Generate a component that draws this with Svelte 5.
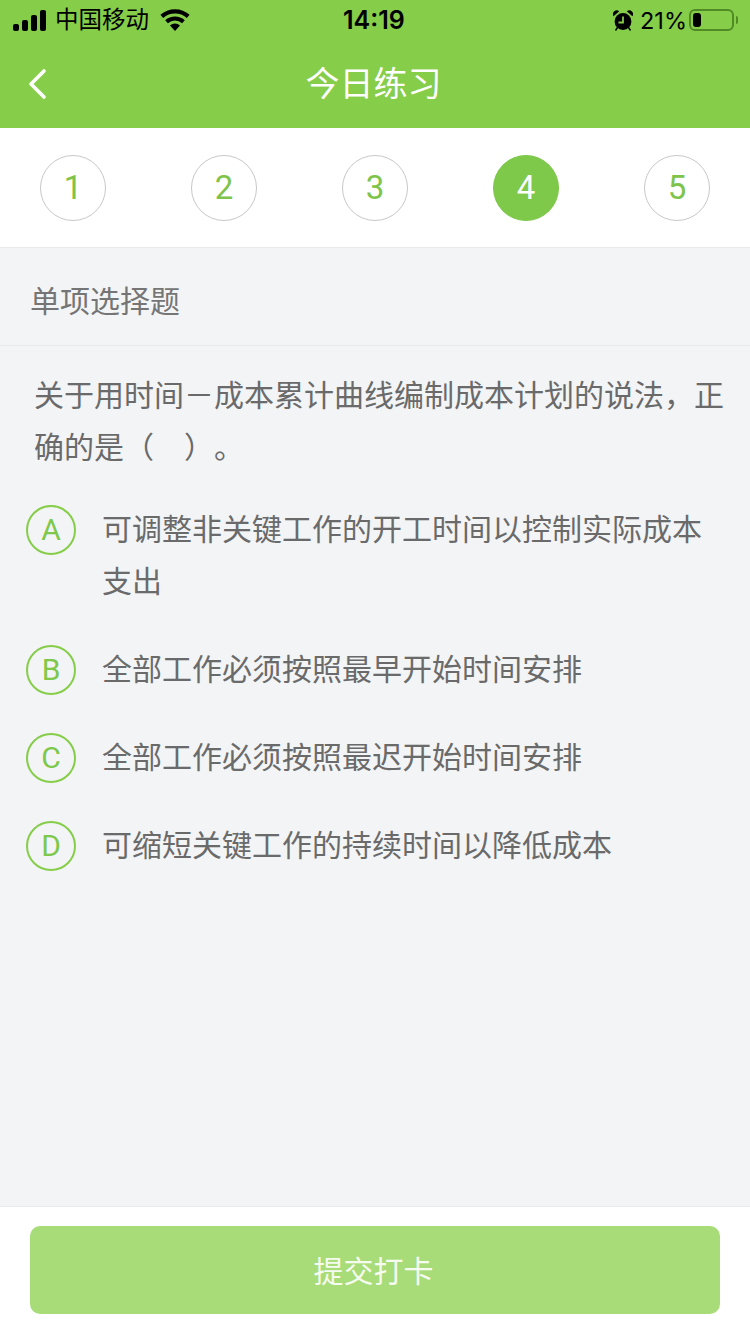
<script>
	const steps = [1, 2, 3, 4, 5];
	const current = 4;

	const options = [
		{ key: 'A', text: '可调整非关键工作的开工时间以控制实际成本支出' },
		{ key: 'B', text: '全部工作必须按照最早开始时间安排' },
		{ key: 'C', text: '全部工作必须按照最迟开始时间安排' },
		{ key: 'D', text: '可缩短关键工作的持续时间以降低成本' }
	];
</script>

<div class="page">
	<header class="head">
		<div class="status">
			<div class="status-left">
				<svg class="signal" width="34" height="21" viewBox="0 0 34 21">
					<rect x="0" y="14" width="6" height="7" rx="2" />
					<rect x="9" y="10" width="6" height="11" rx="2" />
					<rect x="18" y="5" width="6" height="16" rx="2" />
					<rect x="27" y="0" width="6" height="21" rx="2" />
				</svg>
				<span class="carrier">中国移动</span>
				<svg class="wifi" width="30" height="22" viewBox="0 0 30 22">
					<path d="M15 22l-5-5.6a7.4 7.4 0 0 1 10 0z" />
					<path d="M7.9 14.2l-2.7-3a14.6 14.6 0 0 1 19.6 0l-2.7 3a10.6 10.6 0 0 0-14.2 0z" />
					<path d="M3.2 8.9L.4 5.8a21.8 21.8 0 0 1 29.2 0l-2.8 3.1a17.8 17.8 0 0 0-23.6 0z" />
				</svg>
			</div>
			<span class="time">14:19</span>
			<div class="status-right">
				<svg class="alarm" width="20" height="21" viewBox="0 0 20 21">
					<circle cx="10" cy="11.5" r="8.4" />
					<path d="M.6 6.2a3.8 3.8 0 0 1 5.6-5zM19.4 6.2a3.8 3.8 0 0 0-5.6-5z" />
					<path d="M4.5 17.5l-2 3M15.5 17.5l2 3" stroke="#000" stroke-width="1.4" />
					<path d="M10 6.5V12.5H5.5" fill="none" stroke="#86cd4a" stroke-width="1.8" />
				</svg>
				<span class="pct">21%</span>
				<div class="battery">
					<div class="level"></div>
				</div>
				<div class="nub"></div>
			</div>
		</div>
		<div class="nav">
			<svg class="back" width="20" height="32" viewBox="0 0 20 32">
				<path d="M17 3L4 16l13 13" fill="none" stroke="#fff" stroke-width="3.6" stroke-linecap="round" stroke-linejoin="round" />
			</svg>
			<h1>今日练习</h1>
		</div>
	</header>

	<div class="steps">
		{#each steps as n}
			<div class="step" class:active={n === current}>{n}</div>
		{/each}
	</div>

	<main class="body">
		<div class="kind">单项选择题</div>
		<p class="question">关于用时间－成本累计曲线编制成本计划的说法，正确的是（　）。</p>
		<ul class="options">
			{#each options as o}
				<li>
					<span class="badge">{o.key}</span>
					<span class="text">{o.text}</span>
				</li>
			{/each}
		</ul>
	</main>

	<footer class="foot">
		<button class="submit">提交打卡</button>
	</footer>
</div>

<style>
	:global(body) {
		background: #f3f4f6;
	}

	.page {
		display: flex;
		flex-direction: column;
		height: 1334px;
		font-family: 'Liberation Sans', 'Noto Sans CJK SC', sans-serif;
		background: #f3f4f6;
	}

	.head {
		background: #86cd4a;
		height: 128px;
		flex-shrink: 0;
	}

	.status {
		display: flex;
		align-items: center;
		justify-content: space-between;
		position: relative;
		height: 40px;
		padding: 0 12px 0 13px;
		color: #000;
	}

	.status-left,
	.status-right {
		display: flex;
		align-items: center;
	}

	.carrier {
		font-size: 23.5px;
		margin-left: 8px;
		line-height: 42px;
	}

	.wifi {
		margin-left: 11px;
	}

	.time {
		position: absolute;
		left: 343px;
		top: 0;
		font-family: 'Inter', sans-serif;
		font-weight: 600;
		font-size: 25px;
		line-height: 41px;
	}

	.alarm {
		margin-right: 7px;
	}

	.pct {
		font-family: 'Inter', sans-serif;
		font-size: 23.5px;
		margin-right: 2px;
		line-height: 41px;
	}

	.battery {
		box-sizing: border-box;
		width: 45px;
		height: 22px;
		border: 2px solid #4f8a25;
		border-radius: 6px;
		padding: 2px;
	}

	.level {
		width: 8px;
		height: 100%;
		background: #000;
		border-radius: 3px;
	}

	.nub {
		width: 2px;
		height: 8px;
		margin-left: 2px;
		background: #4f8a25;
		border-radius: 0 2px 2px 0;
	}

	.nav {
		position: relative;
		height: 88px;
		display: flex;
		align-items: center;
		justify-content: center;
	}

	.back {
		position: absolute;
		left: 27px;
		top: 28px;
	}

	h1 {
		margin: 0 3px 0 0;
		font-size: 34px;
		font-weight: 400;
		color: #fff;
		line-height: 88px;
	}

	.steps {
		display: flex;
		justify-content: space-between;
		padding: 27px 40px 26px;
		background: #fff;
		border-bottom: 1px solid #e8e9eb;
		flex-shrink: 0;
	}

	.step {
		box-sizing: border-box;
		width: 66px;
		height: 66px;
		border-radius: 50%;
		border: 1px solid #c8c8c8;
		color: #7ec44a;
		font-family: 'Roboto', sans-serif;
		font-size: 33px;
		line-height: 64px;
		text-align: center;
	}

	.step.active {
		background: #7ec84a;
		border-color: #7ec84a;
		color: #fff;
	}

	.body {
		flex: 1;
	}

	.kind {
		height: 98px;
		box-sizing: border-box;
		padding-left: 30px;
		font-size: 30px;
		line-height: 108px;
		color: #757575;
		border-bottom: 1px solid #e8e9eb;
	}

	.question {
		margin: 24px 0 0;
		padding: 0 20px 0 34px;
		font-size: 30px;
		line-height: 52px;
		color: #6a6a6a;
		text-spacing-trim: space-all;
	}

	.options {
		list-style: none;
		margin: 30px 0 0;
		padding: 0 30px 0 26px;
	}

	.options li {
		display: flex;
		align-items: flex-start;
		margin-bottom: 36px;
	}

	.badge {
		box-sizing: border-box;
		flex-shrink: 0;
		width: 50px;
		height: 50px;
		margin-top: 1px;
		border: 2px solid #86cd4a;
		border-radius: 50%;
		color: #7ec84a;
		font-family: 'Roboto', sans-serif;
		font-size: 30px;
		line-height: 46px;
		text-align: center;
	}

	.text {
		margin-left: 26px;
		font-size: 30px;
		line-height: 52px;
		color: #6a6a6a;
	}

	.foot {
		flex-shrink: 0;
		height: 128px;
		box-sizing: border-box;
		padding: 19px 30px;
		background: #fff;
		border-top: 1px solid #e8e9eb;
	}

	.submit {
		display: block;
		width: 100%;
		height: 88px;
		padding: 0 3px 2px 0;
		border: none;
		border-radius: 10px;
		background: #a8dc78;
		color: #f6fbf0;
		font-family: inherit;
		font-size: 30px;
	}
</style>
